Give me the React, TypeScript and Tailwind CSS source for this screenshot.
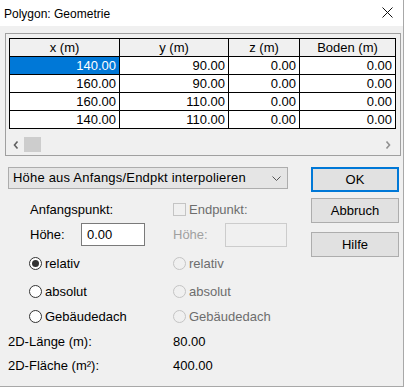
import React from 'react';

const rows = [
  ['140.00', '90.00', '0.00', '0.00'],
  ['160.00', '90.00', '0.00', '0.00'],
  ['160.00', '110.00', '0.00', '0.00'],
  ['140.00', '110.00', '0.00', '0.00'],
];

const Radio: React.FC<{ label: string; checked?: boolean; disabled?: boolean }> = ({ label, checked, disabled }) => (
  <div className={`flex items-center gap-[3px] ${disabled ? 'text-[#6d6d6d]' : 'text-black'}`}>
    <span
      className={`w-[13px] h-[13px] rounded-full border flex items-center justify-center ${
        disabled ? 'border-[#c4c4c4] bg-[#f0f0f0]' : 'border-[#333333] bg-white'
      }`}
    >
      {checked && <span className="w-[7px] h-[7px] rounded-full bg-[#333333]" />}
    </span>
    <span>{label}</span>
  </div>
);

const Button: React.FC<{ label: string; primary?: boolean }> = ({ label, primary }) => (
  <button
    className={`w-[88px] h-[25px] bg-[#e1e1e1] text-[13px] text-black flex items-center justify-center ${
      primary ? 'border-2 border-[#0078d7]' : 'border border-[#adadad]'
    }`}
  >
    {label}
  </button>
);

export default function App() {
  return (
    <div className="w-[405px] h-[388px] bg-white font-['Liberation_Sans',Arial,sans-serif] text-[13px] text-black">
      <div className="w-[404px] h-[387px] border-r border-b border-[#a8a8a8] flex flex-col">
        {/* Title bar */}
        <div className="h-[26px] bg-white flex items-center justify-between pl-[4px] pr-[10px] shrink-0">
          <span className="text-[12px] pt-[1px]">Polygon: Geometrie</span>
          <svg width="11" height="11" viewBox="0 0 11 11" className="mb-[1px]">
            <path d="M0.5 0.5 L10.5 10.5 M10.5 0.5 L0.5 10.5" stroke="#111" strokeWidth="1" />
          </svg>
        </div>

        {/* Body */}
        <div className="flex-1 bg-[#f0f0f0] flex flex-col pt-[7px]">
          {/* Grid frame */}
          <div className="ml-[5px] w-[396px] h-[123px] border border-[#a0a0a0] pt-[4px] pl-[3px] flex flex-col">
            <table className="border-collapse w-[386px] table-fixed">
              <colgroup>
                <col className="w-[110px]" />
                <col className="w-[109px]" />
                <col className="w-[71px]" />
                <col className="w-[96px]" />
              </colgroup>
              <thead>
                <tr className="h-[18px]">
                  {['x (m)', 'y (m)', 'z (m)', 'Boden (m)'].map((h) => (
                    <th key={h} className="border border-black bg-[#f0f0f0] font-normal text-center p-0 leading-[16px]">
                      {h}
                    </th>
                  ))}
                </tr>
              </thead>
              <tbody>
                {rows.map((r, i) => (
                  <tr key={i} className="h-[18px]">
                    {r.map((c, j) => (
                      <td
                        key={j}
                        className={`border border-black text-right p-0 pr-[3px] leading-[16px] ${
                          i === 0 && j === 0 ? 'bg-[#0078d7] text-white' : 'bg-white'
                        }`}
                      >
                        {c}
                      </td>
                    ))}
                  </tr>
                ))}
              </tbody>
            </table>
            {/* Horizontal scrollbar */}
            <div className="mt-[7px] w-[389px] -ml-[2px] h-[17px] flex items-center justify-between">
              <div className="flex items-center">
                <span className="w-[17px] flex items-center justify-center">
                  <svg width="6" height="8" viewBox="0 0 6 8">
                    <path d="M4.5 0.5 L1.5 4 L4.5 7.5" stroke="#606060" strokeWidth="1.6" fill="none" />
                  </svg>
                </span>
                <span className="w-[17px] h-[15px] bg-[#cdcdcd]" />
              </div>
              <span className="w-[17px] flex items-center justify-center">
                <svg width="6" height="8" viewBox="0 0 6 8">
                  <path d="M1.5 0.5 L4.5 4 L1.5 7.5" stroke="#909090" strokeWidth="1.6" fill="none" />
                </svg>
              </span>
            </div>
          </div>

          {/* Lower part */}
          <div className="flex mt-[11px]">
            <div className="ml-[8px] w-[280px] flex flex-col">
              <div className="h-[22px] border border-[#adadad] bg-[#e5e5e5] flex items-center justify-between pl-[4px] pr-[6px]">
                <span className="tracking-[0.2px]">Höhe aus Anfangs/Endpkt interpolieren</span>
                <svg width="9" height="5" viewBox="0 0 9 5">
                  <path d="M0.5 0.5 L4.5 4.5 L8.5 0.5" stroke="#555" strokeWidth="1" fill="none" />
                </svg>
              </div>

              <div className="grid grid-cols-[143px_1fr] ml-[22px] mt-[13px]">
                <div className="h-[15px] flex items-center">Anfangspunkt:</div>
                <div className="h-[15px] flex items-center gap-[3px] text-[#6d6d6d]">
                  <span className="w-[13px] h-[13px] border border-[#c4c4c4] bg-[#f0f0f0]" />
                  <span>Endpunkt:</span>
                </div>

                <div className="flex items-center mt-[6px] h-[23px]">
                  <span className="w-[51px]">Höhe:</span>
                  <div className="w-[64px] h-[23px] border border-[#7a7a7a] bg-white flex items-center pl-[5px]">0.00</div>
                </div>
                <div className="flex items-center mt-[6px] h-[23px]">
                  <span className="w-[52px] text-[#a0a0a0]">Höhe:</span>
                  <div className="w-[62px] h-[24px] border border-[#cccccc] bg-[#f0f0f0]" />
                </div>

                <div className="mt-[11px] flex flex-col">
                  <div className="-ml-[1px] h-[13px] flex items-center"><Radio label="relativ" checked /></div>
                  <div className="-ml-[1px] h-[13px] mt-[15px] flex items-center"><Radio label="absolut" /></div>
                  <div className="-ml-[1px] h-[13px] mt-[12px] flex items-center"><Radio label="Gebäudedach" /></div>
                </div>
                <div className="mt-[11px] flex flex-col">
                  <div className="h-[13px] flex items-center"><Radio label="relativ" disabled /></div>
                  <div className="h-[13px] mt-[15px] flex items-center"><Radio label="absolut" disabled /></div>
                  <div className="h-[13px] mt-[12px] flex items-center"><Radio label="Gebäudedach" disabled /></div>
                </div>
              </div>

              <div className="grid grid-cols-[165px_1fr] mt-[11px] gap-y-[9px]">
                <div className="h-[15px] flex items-center">2D-Länge (m):</div>
                <div className="h-[15px] flex items-center">80.00</div>
                <div className="h-[15px] flex items-center">2D-Fläche (m²):</div>
                <div className="h-[15px] flex items-center">400.00</div>
              </div>
            </div>

            <div className="ml-[23px] flex flex-col">
              <Button label="OK" primary />
              <div className="mt-[6px]"><Button label="Abbruch" /></div>
              <div className="mt-[9px]"><Button label="Hilfe" /></div>
            </div>
          </div>
        </div>
      </div>
    </div>
  );
}
